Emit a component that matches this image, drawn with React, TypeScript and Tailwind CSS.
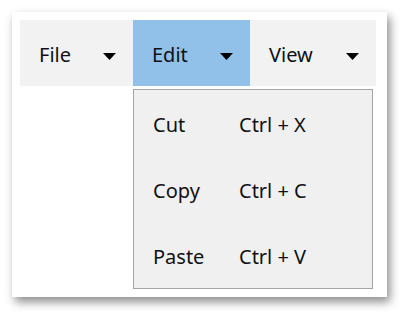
import { useState } from 'react';

const menus = [
  { label: 'File', width: 'w-[113px]' },
  { label: 'Edit', width: 'w-[117px]' },
  { label: 'View', width: 'w-[126px]' },
];

const editItems = [
  { label: 'Cut', shortcut: 'Ctrl + X' },
  { label: 'Copy', shortcut: 'Ctrl + C' },
  { label: 'Paste', shortcut: 'Ctrl + V' },
];

function Caret() {
  return (
    <svg width="13" height="7" viewBox="0 0 13 7" className="shrink-0 mt-[4px]">
      <path d="M0 0 L13 0 L6.5 7 Z" fill="#000" />
    </svg>
  );
}

export default function App() {
  const [open, setOpen] = useState<string | null>('Edit');

  return (
    <div className="w-[406px] h-[317px] bg-white p-[12px]" style={{ fontFamily: '"Noto Sans", "Open Sans", sans-serif' }}>
      <div className="w-[375px] h-[285px] bg-white p-[8px] shadow-[3px_5px_9px_rgba(0,0,0,0.45)]">
        <div className="flex h-[66px] w-[356px] bg-[#f2f2f2]">
          {menus.map((m) => (
            <div key={m.label} className="relative">
              <button
                onClick={() => setOpen(open === m.label ? null : m.label)}
                className={`${m.width} h-[66px] flex items-center justify-between pl-[19px] pr-[17px] pt-[3px] text-[20px] leading-[28px] text-[#111] ${
                  open === m.label ? 'bg-[#91c0e8]' : ''
                }`}
              >
                <span>{m.label}</span>
                <Caret />
              </button>
              {open === m.label && m.label === 'Edit' && (
                <div className="absolute left-0 top-[69px] w-[240px] h-[200px] bg-[#f0f0f0] border border-[#a5a5a5] z-10">
                  {editItems.map((item) => (
                    <div key={item.label} className="flex items-center h-[66px] pl-[19px] pt-[4px] text-[20px] leading-[28px] text-[#111]">
                      <span className="w-[86px]">{item.label}</span>
                      <span>{item.shortcut}</span>
                    </div>
                  ))}
                </div>
              )}
            </div>
          ))}
        </div>
      </div>
    </div>
  );
}
